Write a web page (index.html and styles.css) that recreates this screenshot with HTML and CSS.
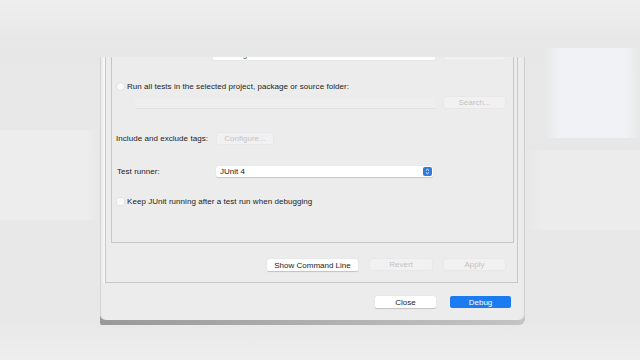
FILE: index.html
```html
<!DOCTYPE html>
<html>
<head>
<meta charset="utf-8">
<link rel="stylesheet" href="styles.css">
</head>
<body>
<div class="stage">
  <div class="frame">
    <div class="window">
      <div class="scroll">
        <div class="panel">
          <div class="group">
            <div class="row method">
              <span class="label-ind">Test method:</span>
              <span class="field wide">UserLoginTest</span>
              <span class="btn disabled w61">Search...</span>
            </div>
            <div class="row radio-row">
              <span class="radio"></span>
              <span class="txt">Run all tests in the selected project, package or source folder:</span>
            </div>
            <div class="row search-row">
              <span class="field faint"></span>
              <span class="btn disabled w61">Search...</span>
            </div>
            <div class="row include-row">
              <span class="label">Include and exclude tags:</span>
              <span class="btn disabled w56">Configure...</span>
            </div>
            <div class="row runner-row">
              <span class="label">Test runner:</span>
              <span class="select">
                <span class="sel-text">JUnit 4</span>
                <span class="stepper">
                  <svg width="5" height="7" viewBox="0 0 5 7"><path d="M1 2.6 L2.5 1.2 L4 2.6 M1 4.4 L2.5 5.8 L4 4.4" fill="none" stroke="#fff" stroke-width="0.9"/></svg>
                </span>
              </span>
            </div>
            <div class="row check-row">
              <span class="check"></span>
              <span class="txt">Keep JUnit running after a test run when debugging</span>
            </div>
          </div>
          <div class="actions">
            <span class="btn normal w91">Show Command Line</span>
            <span class="btn disabled w62">Revert</span>
            <span class="btn disabled w61">Apply</span>
          </div>
        </div>
      </div>
      <div class="footer">
        <span class="btn normal w61">Close</span>
        <span class="btn primary w61">Debug</span>
      </div>
    </div>
  </div>
</div>
</body>
</html>
```

FILE: styles.css
```css
html, body {
  margin: 0;
  padding: 0;
}
body {
  width: 640px;
  height: 360px;
  overflow: hidden;
  font-family: "Liberation Sans", Arial, sans-serif;
  font-size: 8px;
  color: #222;
  background-color: #e8e8e8;
  background-image:
    linear-gradient(90deg, rgba(240,242,245,0), #f0f2f5 15px, #f0f2f5 80px, rgba(240,242,245,0)),
    linear-gradient(90deg, #ededed, #ededed 85px, rgba(237,237,237,0)),
    linear-gradient(90deg, rgba(236,236,236,0), #ececec 20px),
    linear-gradient(to bottom, #eeeeee 0, #e7e7e7 45px, #e8e8e8 320px, #eeeeee 360px);
  background-size: 95px 90px, 100px 90px, 115px 80px, 640px 360px;
  background-position: 545px 48px, 0 130px, 525px 150px, 0 0;
  background-repeat: no-repeat;
}
.stage {
  padding: 57px 0 0 100px;
}
.frame {
  width: 425px;
  padding-bottom: 5px;
  background: linear-gradient(90deg, #999999, #b3b3b3 60%, #c4c4c4);
  border-radius: 0 0 6px 2px;
}
.window {
  height: 263px;
  overflow: hidden;
  background: #ececec;
  border-radius: 0 0 6px 6px;
  box-shadow: inset 1px 0 0 #d4d4d4, inset -1px 0 0 #d0d0d0;
  display: flex;
  flex-direction: column;
}
.scroll {
  margin-top: -12px;
  padding: 0 7px 0 5px;
}
.panel {
  border: 1px solid #c9c9c9;
  border-top: none;
  box-shadow: -2px 0 0 #f6f6f6;
  padding: 0 3px 11px 5px;
}
.group {
  border: 1px solid #c6c6c6;
  border-top: none;
  padding: 0 0 36px 4px;
  display: flex;
  flex-direction: column;
}
.row {
  display: flex;
  align-items: center;
}
.txt, .label {
  letter-spacing: 0.05px;
}
.method {
  height: 11px;
  margin-top: 4px;
}
.label-ind {
  width: 83px;
  margin-left: 14px;
  color: #555;
}
.field {
  height: 11px;
  background: #fff;
  box-shadow: 0 0 0 0.5px #dedede;
  display: flex;
  align-items: center;
  padding-left: 4px;
  box-sizing: border-box;
  color: #555;
}
.wide {
  width: 222px;
  margin-right: 9px;
}
.radio-row {
  height: 10px;
  margin-top: 21px;
}
.radio {
  width: 7px;
  height: 7px;
  border-radius: 50%;
  background: #f9f9f9;
  box-shadow: 0 0 0 0.5px #d8d8d8;
  margin-left: 1px;
  margin-right: 3px;
}
.check {
  width: 7px;
  height: 7px;
  border-radius: 1.5px;
  background: #f9f9f9;
  box-shadow: 0 0 0 0.5px #d8d8d8;
  margin-left: 1px;
  margin-right: 3px;
}
.search-row {
  height: 11px;
  margin-top: 6px;
}
.faint {
  width: 300px;
  margin-left: 19px;
  margin-right: 9px;
  background: #eeeeee;
  box-shadow: 0 1px 0 #e2e2e2;
}
.include-row {
  height: 11px;
  margin-top: 25px;
}
.label {
  width: 101px;
}
.runner-row {
  height: 11px;
  margin-top: 22px;
}
.runner-row .label {
  width: 99px;
  margin-left: 1px;
}
.select {
  width: 217px;
  height: 11px;
  background: #fff;
  border-radius: 2px;
  box-shadow: 0 0.5px 1px rgba(0,0,0,0.15);
  display: flex;
  align-items: center;
  justify-content: space-between;
  padding: 0 1px 0 4px;
  box-sizing: border-box;
}
.stepper {
  width: 9px;
  height: 9px;
  border-radius: 2px;
  background: #2e7ce2;
  display: flex;
  align-items: center;
  justify-content: center;
}
.stepper svg {
  display: block;
}
.check-row {
  height: 10px;
  margin-top: 19px;
}
.btn {
  height: 12px;
  box-sizing: border-box;
  display: flex;
  align-items: center;
  justify-content: center;
  border-radius: 2px;
  white-space: nowrap;
}
.btn.disabled {
  background: #f1f1f1;
  color: #c4c4c4;
  box-shadow: 0 0 0 0.5px #e4e4e4;
  height: 11px;
}
.btn.normal {
  background: #fff;
  color: #222;
  box-shadow: 0 0.5px 1px rgba(0,0,0,0.18);
}
.btn.primary {
  background: #1b7cf2;
  color: #fff;
}
.w61 { width: 61px; }
.w62 { width: 62px; }
.w56 { width: 56px; }
.w91 { width: 91px; }
.actions {
  display: flex;
  justify-content: flex-end;
  gap: 12px;
  margin: 16px 9px 0 0;
}
.footer {
  display: flex;
  justify-content: flex-end;
  gap: 14px;
  margin-top: 13px;
  padding-right: 14px;
}
```
